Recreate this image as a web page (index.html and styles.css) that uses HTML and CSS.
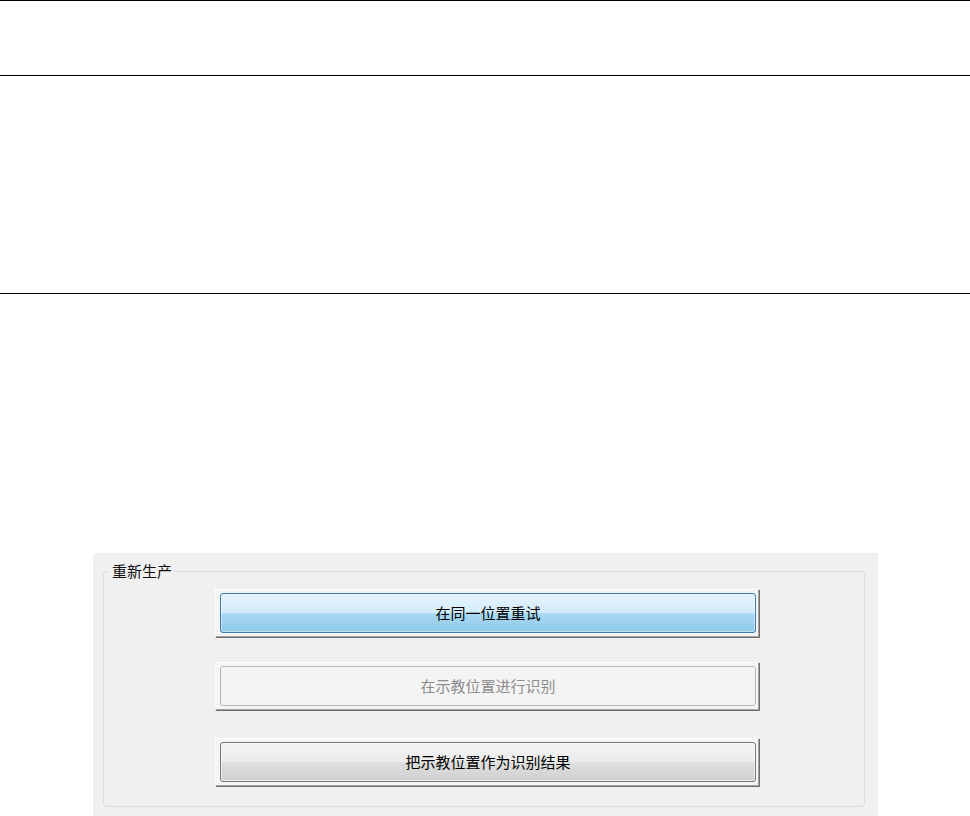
FILE: index.html
```html
<!DOCTYPE html>
<html lang="zh-CN">
<head>
<meta charset="utf-8">
<title>重新生产</title>
<link rel="stylesheet" href="styles.css">
</head>
<body>
<div class="band band-top"></div>
<div class="band band-mid"></div>
<div class="panel">
  <fieldset class="group">
    <legend class="group-title">重新生产</legend>
    <div class="btn-frame">
      <button class="btn btn-primary" type="button">在同一位置重试</button>
    </div>
    <div class="btn-frame second">
      <button class="btn btn-disabled" type="button" disabled>在示教位置进行识别</button>
    </div>
    <div class="btn-frame third">
      <button class="btn btn-normal" type="button">把示教位置作为识别结果</button>
    </div>
  </fieldset>
</div>
</body>
</html>
```
FILE: styles.css
```css
html, body {
  margin: 0;
  padding: 0;
  background: #ffffff;
  font-family: "Noto Sans CJK SC", "Noto Sans", sans-serif;
}

.band {
  box-sizing: border-box;
  border-top: 1px solid #000;
}

.band-top {
  height: 75px;
}

.band-mid {
  height: 219px;
  border-bottom: 1px solid #000;
}

.panel {
  box-sizing: border-box;
  margin: 259px 0 0 93px;
  width: 785px;
  height: 263px;
  background: #f0f0f0;
  padding: 8px 0 0 10px;
}

.group {
  box-sizing: border-box;
  margin: 0;
  width: 762px;
  padding: 8px 0 20px 0;
  border: 1px solid #d6dfe6;
  border-radius: 3px;
}

.group-title {
  margin-left: 5px;
  padding: 0 3px;
  font-size: 15px;
  line-height: 20px;
  color: #111;
}

.btn-frame {
  box-sizing: border-box;
  width: 544px;
  height: 48px;
  margin-left: 111px;
  padding: 3px 2px 3px 4px;
  background: #f5f5f5;
  border-top: 1px solid #fdfdfd;
  border-left: 1px solid #fdfdfd;
  border-right: 1px solid #a3a3a3;
  border-bottom: 1px solid #a3a3a3;
  box-shadow: 1px 1px 0 #6e6e6e;
}

.btn-frame.second {
  margin-top: 25px;
}

.btn-frame.third {
  margin-top: 28px;
}

.btn {
  box-sizing: border-box;
  display: block;
  width: 100%;
  height: 40px;
  margin: 0;
  padding: 0;
  border-radius: 3px;
  font-family: "Noto Sans CJK SC", "Noto Sans", sans-serif;
  font-size: 15px;
  line-height: 20px;
  color: #000;
  cursor: default;
}

.btn-primary {
  border: 1px solid #3d7aa8;
  background: linear-gradient(#e4f3fc 0%, #d4ecfa 48%, #a9d9f3 52%, #8ec9ea 100%);
  box-shadow: inset 0 0 0 1px rgba(255, 255, 255, 0.45);
}

.btn-disabled {
  border: 1px solid #b4b8bb;
  background: #f4f4f4;
  color: #8c8c8c;
}

.btn-normal {
  border: 1px solid #767676;
  background: linear-gradient(#f3f3f3 0%, #ececec 48%, #dedede 52%, #d0d0d0 100%);
  box-shadow: inset 0 0 0 1px rgba(255, 255, 255, 0.6);
}
```
